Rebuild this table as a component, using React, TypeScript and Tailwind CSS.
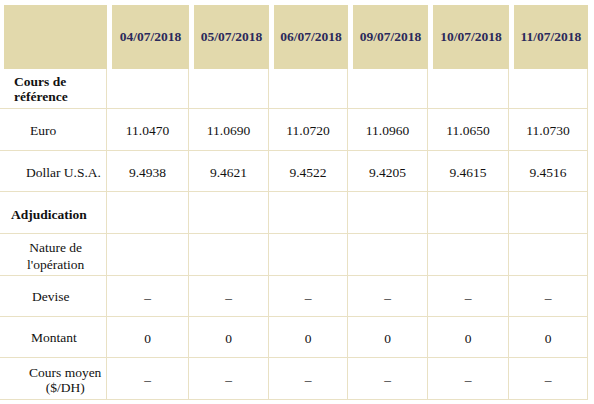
const dates = ["04/07/2018", "05/07/2018", "06/07/2018", "09/07/2018", "10/07/2018", "11/07/2018"];

type Row = {
    h: string;
    label: React.ReactNode;
    values: string[];
};

const empty = ["", "", "", "", "", ""];
const dash = ["–", "–", "–", "–", "–", "–"];

const rows: Row[] = [
    {
        h: "h-[40px]",
        label: (
            <div className="pl-[14px] font-bold leading-[15px] text-left">
                Cours de
                <br />
                référence
            </div>
        ),
        values: empty,
    },
    {
        h: "h-[42px]",
        label: <div className="pl-[30px] pt-[3px]">Euro</div>,
        values: ["11.0470", "11.0690", "11.0720", "11.0960", "11.0650", "11.0730"],
    },
    {
        h: "h-[41px]",
        label: <div className="pl-[26px] pt-[4px]">Dollar U.S.A.</div>,
        values: ["9.4938", "9.4621", "9.4522", "9.4205", "9.4615", "9.4516"],
    },
    {
        h: "h-[42px]",
        label: <div className="pl-[11px] pt-[5px] font-bold">Adjudication</div>,
        values: empty,
    },
    {
        h: "h-[42px]",
        label: (
            <div className="pl-[27px] pt-[2px] leading-[17px]">
                <div className="inline-block text-center">
                    Nature de
                    <br />
                    l&apos;opération
                </div>
            </div>
        ),
        values: empty,
    },
    {
        h: "h-[41px]",
        label: <div className="pl-[32px] pt-[2px]">Devise</div>,
        values: dash,
    },
    {
        h: "h-[41px]",
        label: <div className="pl-[31px] pt-[2px]">Montant</div>,
        values: ["0", "0", "0", "0", "0", "0"],
    },
    {
        h: "h-[42px]",
        label: (
            <div className="pl-[29px] pt-[2px] leading-[15px]">
                <div className="inline-block text-center">
                    Cours moyen
                    <br />
                    ($/DH)
                </div>
            </div>
        ),
        values: dash,
    },
];

export default function App() {
    return (
        <div className="w-[594px] h-[404px] bg-white pt-[5px] text-[13.5px] text-[#111111] font-[Liberation_Serif]">
            <div className="grid w-[588px] grid-cols-[107px_82px_80px_79px_80px_81px_79px]">
                {/* header */}
                <div className="h-[64px] pl-[4px]">
                    <div className="h-full bg-[#e2d9ac]" />
                </div>
                {dates.map((d) => (
                    <div key={d} className="h-[64px] pl-[5px]">
                        <div className="h-full bg-[#e2d9ac] flex items-center justify-center pt-[1px] font-bold text-[#2b2a5c]">
                            {d}
                        </div>
                    </div>
                ))}

                {/* body */}
                {rows.map((r, i) => (
                    <div key={i} className="contents">
                        <div className={`${r.h} flex items-center border-r border-b border-[#e9e1c4]`}>
                            {r.label}
                        </div>
                        {r.values.map((v, j) => (
                            <div
                                key={j}
                                className={`${r.h} flex items-center justify-center pt-[4px] border-r border-b border-[#e9e1c4]`}
                            >
                                {v}
                            </div>
                        ))}
                    </div>
                ))}
            </div>
        </div>
    );
}
